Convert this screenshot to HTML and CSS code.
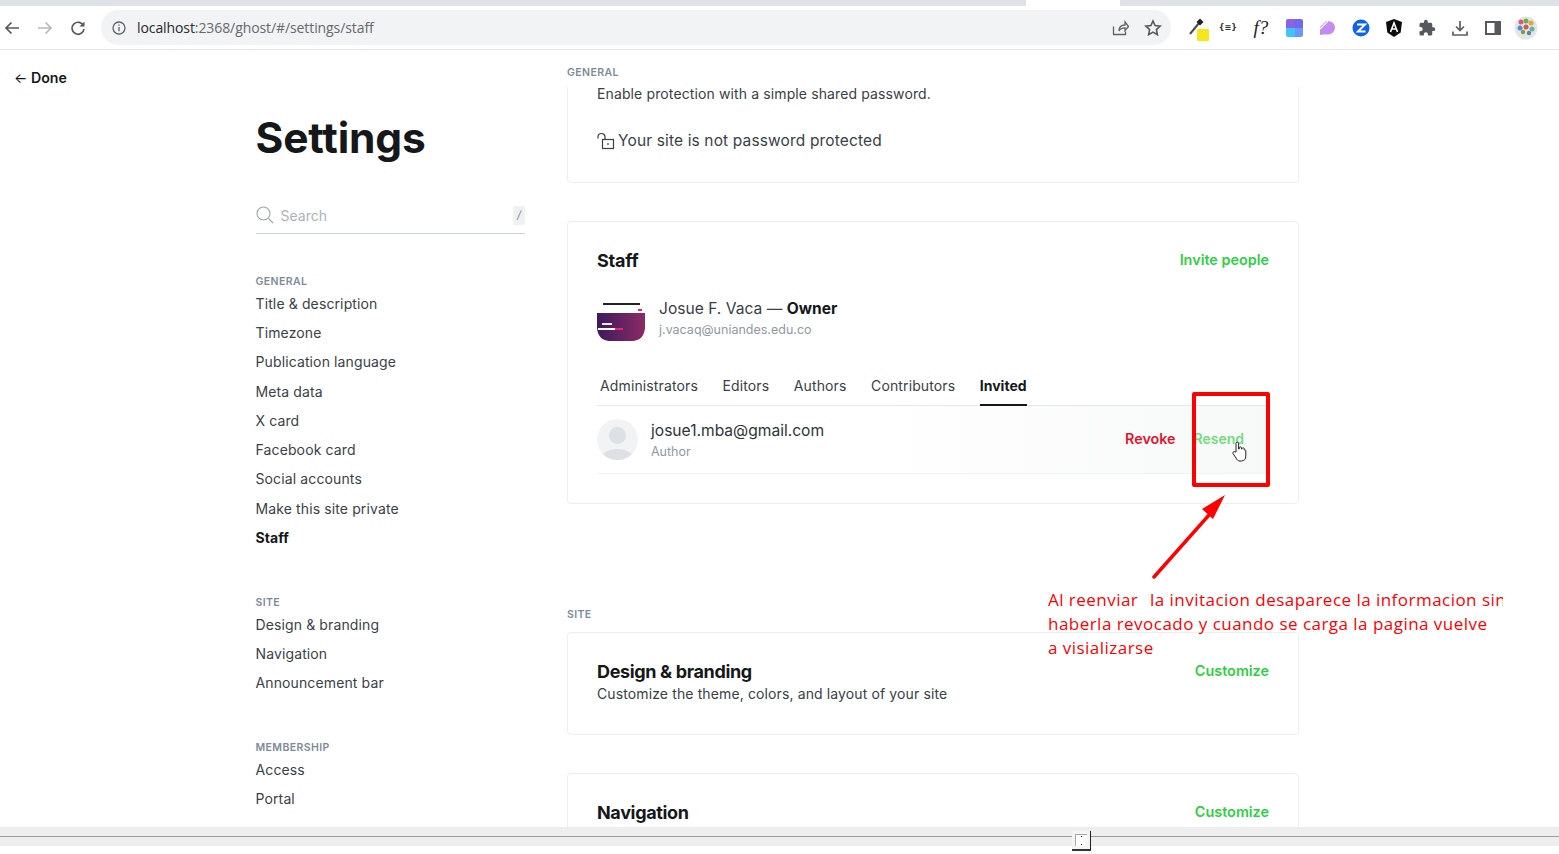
FILE: index.html
```html
<!DOCTYPE html>
<html lang="en">
<head>
<meta charset="utf-8">
<title>Settings - Staff</title>
<link rel="stylesheet" href="styles.css">
</head>
<body>
<div class="tabstrip"><div class="tab-gap"></div></div>
<header class="toolbar">
  <div class="nav-btn"><svg width="16" height="16" viewBox="0 0 16 16"><path d="M15 8H2M7.500 2.500 2 8l5.500 5.500" class="ic"/></svg></div>
  <div class="nav-btn"><svg width="16" height="16" viewBox="0 0 16 16"><path d="M1 8h13M8.500 2.500 14 8l-5.500 5.500" class="ic ic-dim"/></svg></div>
  <div class="nav-btn"><svg width="16" height="16" viewBox="0 0 16 16"><path d="M13.600 6A6 6 0 1 0 14 9" class="ic"/><path d="M14.500 1.500v5h-5z" class="ic-fill"/></svg></div>
  <div class="omnibox">
    <svg class="info" width="14" height="14" viewBox="0 0 14 14"><circle cx="7" cy="7" r="6" class="ic-thin"/><path d="M7 6v4.200M7 3.500v1.300" class="ic-thin"/></svg>
    <span class="url"><span class="url-host">localhost</span>:2368/ghost/#/settings/staff</span>
    <div class="omni-actions">
      <svg width="18" height="18" viewBox="0 0 18 18"><path d="M2.500 7.500v8h12v-3M8 12c0-4 2.500-6 6-6V3l3.500 4.500L14 11.500V8.800c-3 0-5 1-6 3.200z" class="ic-thin"/></svg>
      <svg width="18" height="18" viewBox="0 0 18 18"><path d="m9 2 2.100 4.600 5 .6-3.700 3.400 1 5L9 13.100 4.600 15.600l1-5L1.900 7.200l5-.6z" class="ic-star"/></svg>
    </div>
  </div>
  <div class="ext-row">
    <div class="ext ext-first"><svg width="28" height="26" viewBox="0 0 28 26"><path d="M9 19 18 8" class="drop"/><path d="M19 3.500l3.500 3.500-3.500 3.500-3.500-3.500z" fill="#222"/><rect x="16" y="14" width="12" height="12" rx="1" fill="#f6e71d"/></svg></div>
    <div class="ext ext-json">{≡}</div>
    <div class="ext ext-f">f?</div>
    <div class="ext"><svg width="17" height="18" viewBox="0 0 17 18"><defs><clipPath id="tile"><rect width="17" height="18" rx="2"/></clipPath></defs><g clip-path="url(#tile)"><rect width="9" height="9" fill="#8a63e8"/><rect x="9" width="8" height="9" fill="#7468ee"/><rect y="9" width="9" height="9" fill="#3fc4fb"/><rect x="9" y="9" width="8" height="9" fill="#6a97fa"/></g></svg></div>
    <div class="ext"><svg width="16" height="16" viewBox="0 0 16 16"><path d="M1 15V7L7 1h2a7 7 0 0 1 7 6.500A7 7 0 0 1 9 14.500H4z" fill="#c58bf0"/><path d="M1 5.500 5.500 1M1 9l8-8" stroke="#fff" stroke-width="1.300"/></svg></div>
    <div class="ext"><svg width="18" height="18" viewBox="0 0 18 18"><circle cx="9" cy="9" r="8.500" fill="#0f62ea"/><path d="M5 5.500h8L6 12.500h7.500" fill="none" stroke="#fff" stroke-width="2"/></svg></div>
    <div class="ext"><svg width="18" height="18" viewBox="0 0 18 18"><path d="M9 0 17 3l-1.300 10.500L9 18l-6.700-4.500L1 3z" fill="#0c0c0c"/><path d="M5.500 13 9 4l3.500 9M6.800 10h4.400" fill="none" stroke="#fff" stroke-width="1.600"/></svg></div>
    <div class="ext"><svg width="18" height="18" viewBox="0 0 24 24"><path d="M20.500 11H19V7c0-1.100-.9-2-2-2h-4V3.500a2.500 2.500 0 0 0-5 0V5H4c-1.100 0-2 .9-2 2v3.800h1.500c1.490 0 2.700 1.210 2.700 2.700s-1.210 2.700-2.700 2.700H2V20c0 1.100.9 2 2 2h3.800v-1.500c0-1.490 1.210-2.700 2.700-2.700s2.700 1.210 2.700 2.700V22H17c1.100 0 2-.9 2-2v-4h1.500a2.500 2.500 0 0 0 0-5z" fill="#55585c"/></svg></div>
    <div class="ext"><svg width="18" height="18" viewBox="0 0 18 18"><path d="M9 2v9M5 7.500 9 11.500l4-4M2 12.500v3.500h14v-3.500" class="ic ic-gray"/></svg></div>
    <div class="ext"><svg width="16" height="16" viewBox="0 0 16 16"><rect x="1" y="2" width="14" height="12" fill="#fff" stroke="#55585c" stroke-width="2"/><rect x="9.500" y="2" width="5" height="12" fill="#55585c"/></svg></div>
    <div class="ext"><svg width="24" height="24" viewBox="0 0 24 24"><circle cx="12" cy="12" r="11.500" fill="#e4e6e6"/><circle cx="7" cy="6" r="2.500" fill="#e0557a"/><circle cx="12" cy="5" r="2.500" fill="#62b34d"/><circle cx="17" cy="7" r="2.500" fill="#e9a23b"/><circle cx="6" cy="12" r="2.500" fill="#4c8fd1"/><circle cx="12" cy="11" r="2.500" fill="#d9534f"/><circle cx="18" cy="13" r="2.500" fill="#5fb5a8"/><circle cx="9" cy="16" r="2.200" fill="#7e9a4a"/><circle cx="15" cy="17" r="2.200" fill="#5d7fa8"/></svg></div>
  </div>
</header>

<main class="page">
  <div class="back-col"><a class="done"><span class="done-arrow">←</span> Done</a></div>

  <aside class="sidebar">
    <h1 class="title">Settings</h1>
    <div class="search">
      <svg width="18" height="18" viewBox="0 0 18 18"><circle cx="7.500" cy="7.500" r="6.500" class="search-ic"/><path d="m12.500 12.500 4.500 4.500" class="search-ic"/></svg>
      <span class="search-text">Search</span>
      <span class="kbd">/</span>
    </div>
    <div class="nav-group">
      <div class="group-label side-label">GENERAL</div>
      <div class="nav-item">Title &amp; description</div>
      <div class="nav-item">Timezone</div>
      <div class="nav-item">Publication language</div>
      <div class="nav-item">Meta data</div>
      <div class="nav-item">X card</div>
      <div class="nav-item">Facebook card</div>
      <div class="nav-item">Social accounts</div>
      <div class="nav-item">Make this site private</div>
      <div class="nav-item nav-active">Staff</div>
    </div>
    <div class="nav-group">
      <div class="group-label side-label">SITE</div>
      <div class="nav-item">Design &amp; branding</div>
      <div class="nav-item">Navigation</div>
      <div class="nav-item">Announcement bar</div>
    </div>
    <div class="nav-group">
      <div class="group-label side-label">MEMBERSHIP</div>
      <div class="nav-item">Access</div>
      <div class="nav-item">Portal</div>
    </div>
  </aside>

  <section class="content">
    <div class="sticky-label"><span class="group-label">GENERAL</span></div>
    <div class="card card-clipped">
      <p class="desc">Enable protection with a simple shared password.</p>
      <div class="lock-row">
        <svg width="18" height="18" viewBox="0 0 18 18"><rect x="5.500" y="7.500" width="11" height="9" class="lock"/><path d="M1 6.500V5a3.500 3.500 0 0 1 7 0v2.500" class="lock"/><path d="M11 11v2" class="lock"/></svg>
        <span>Your site is not password protected</span>
      </div>
    </div>

    <div class="card card-staff">
      <div class="card-head">
        <h2 class="card-title">Staff</h2>
        <a class="link-green">Invite people</a>
      </div>
      <div class="owner">
        <svg class="owner-pic" width="48" height="48" viewBox="0 0 48 48">
          <defs>
            <linearGradient id="ownerBg" x1="0" y1="0" x2="1" y2="0"><stop offset="0" stop-color="#3d1a5c"/><stop offset="1" stop-color="#8a2c66"/></linearGradient>
          </defs>
          <rect x="6" y="8" width="37" height="2" fill="#222"/>
          <rect x="41" y="14" width="4" height="2" fill="#f0246b"/>
          <path d="M0 18H48V33Q47 45 36 46H12Q1 45 0 33Z" fill="url(#ownerBg)"/>
          <rect x="5" y="28" width="10" height="2" fill="#e8e8ee"/>
          <rect x="1" y="33" width="17" height="2" fill="#fff"/>
          <rect x="18" y="33" width="8" height="2" fill="#f0246b"/>
        </svg>
        <div>
          <div class="owner-name">Josue F. Vaca — <strong>Owner</strong></div>
          <div class="owner-mail">j.vacaq@uniandes.edu.co</div>
        </div>
      </div>
      <nav class="tabs">
        <span class="tab">Administrators</span>
        <span class="tab">Editors</span>
        <span class="tab">Authors</span>
        <span class="tab">Contributors</span>
        <span class="tab tab-active">Invited</span>
      </nav>
      <div class="invite">
        <svg class="invite-pic" width="41" height="41" viewBox="0 0 41 41"><defs><clipPath id="inv"><circle cx="20.500" cy="20.500" r="20.500"/></clipPath></defs><g clip-path="url(#inv)"><rect width="41" height="41" fill="#f1f3f4"/><circle cx="20.500" cy="16.500" r="8.500" fill="#dde0e4"/><ellipse cx="20.500" cy="39" rx="16" ry="9" fill="#dde0e4"/></g></svg>
        <div class="invite-text">
          <div class="invite-mail">josue1.mba@gmail.com</div>
          <div class="invite-role">Author</div>
        </div>
        <a class="link-red">Revoke</a>
        <a class="link-resend">Resend</a>
      </div>
    </div>

    <div class="section-label"><span class="group-label">SITE</span></div>
    <div class="card card-design">
      <div class="design-row">
        <div>
          <h2 class="card-title card-title-lg">Design &amp; branding</h2>
          <p class="desc desc-tight">Customize the theme, colors, and layout of your site</p>
        </div>
        <a class="link-green">Customize</a>
      </div>
    </div>
    <div class="card card-nav">
      <div class="nav-row">
        <h2 class="card-title card-title-lg">Navigation</h2>
        <a class="link-green">Customize</a>
      </div>
    </div>
  </section>

  <div class="annot-box"></div>
  <svg class="annot-arrow" width="90" height="100" viewBox="0 0 90 100"><path d="M5 85 68 14" stroke="#f00" stroke-width="3.500" stroke-linecap="round"/><path d="M76 3 53 17l11 10z" fill="#f00"/></svg>
  <svg class="cursor" width="15" height="21" viewBox="0 0 15 21"><path d="M4 11V2.500a1.300 1.300 0 0 1 2.600 0V8h.6V6.800a1.200 1.200 0 0 1 2.300 0V8h.5V7.500a1.200 1.200 0 0 1 2.200 0V9c1-.4 1.600 0 1.600 1v5c0 3-1.500 5-4.500 5H8c-2 0-3-1-4-3l-3-4.500c-.6-1.500 1-2.500 2-1.500z" fill="#fff" stroke="#222" stroke-width="1"/></svg>
  <div class="annot-text">
    <div>Al reenviar&nbsp; <span class="annot-gap">la invitacion desaparece la informacion sin</span></div>
    <div>haberla revocado y cuando se carga la pagina vuelve</div>
    <div>a visializarse</div>
  </div>
</main>

<footer class="bottom-bar">
  <div class="bottom-line"></div>
  <div class="thumb"><div class="thumb-inner"></div></div>
</footer>
</body>
</html>
```
FILE: styles.css
```css
* { box-sizing: border-box; }
html, body { margin: 0; padding: 0; height: 100%; overflow: hidden; background: #fff; }
body { width: 1559px; height: 854px; font-family: Inter, "Liberation Sans", sans-serif; color: #15171a; position: relative; }

.tabstrip { height: 6px; background: #dee1e6; position: relative; }
.tab-gap { position: absolute; left: 1026px; top: 0; width: 94px; height: 6px; background: #fff; }

.toolbar { height: 44px; display: flex; align-items: center; border-bottom: 1px solid #e3e5e7; background: #fff; }
.nav-btn { width: 33px; height: 34px; display: flex; align-items: center; justify-content: center; flex: none; }
.nav-btn:first-child { margin-left: -5px; }
.ic { fill: none; stroke: #55585c; stroke-width: 1.7; }
.ic-dim { stroke: #b5b8bb; }
.ic-gray { stroke: #5b5e62; }
.ic-fill { fill: #55585c; }
.ic-thin { fill: none; stroke: #5f6368; stroke-width: 1.3; }
.ic-star { fill: none; stroke: #55585c; stroke-width: 1.6; }
.omnibox { width: 1070px; height: 35px; border-radius: 18px; background: #f1f3f4; display: flex; align-items: center; margin-left: 7px; padding: 0 9px 0 11px; flex: none; }
.info { flex: none; margin-right: 11px; }
.url { font-family: "Open Sans", sans-serif; font-size: 14px; color: #66696d; letter-spacing: -0.09px; }
.url-host { color: #26282b; }
.omni-actions { margin-left: auto; display: flex; gap: 15px; align-items: center; }
.ext-row { display: flex; align-items: center; margin-left: 7px; flex: none; }
.ext { width: 33.2px; height: 34px; display: flex; align-items: center; justify-content: center; flex: none; }
.ext-first { overflow: visible; }
.drop { stroke: #4a4f4a; stroke-width: 2; }
.ext-json { font-family: "DejaVu Sans", sans-serif; font-size: 8px; font-weight: 700; color: #333; }
.ext-f { font-family: "Liberation Serif", serif; font-style: italic; font-size: 19px; color: #222; }

.page { height: 777px; overflow: hidden; display: grid; grid-template-columns: 255.500px 269.500px 732px; position: relative; }
.back-col { padding: 19px 0 0 14px; }
.done { font-size: 14.200px; font-weight: 600; line-height: 17px; display: block; color: #15171a; }
.done-arrow { font-size: 14px; font-weight: 400; }

.sidebar { min-width: 0; }
.title { margin: 63px 0 0; font-size: 42.500px; line-height: 50px; font-weight: 700; letter-spacing: -0.15px; color: #15171a; }
.search { margin-top: 34px; height: 37px; display: flex; align-items: center; border-bottom: 1px solid #c8d1da; }
.search-ic { fill: none; stroke: #9aa3ab; stroke-width: 1.100; }
.search-text { margin-left: 7px; font-size: 14px; color: #aab2ba; }
.kbd { margin-left: auto; width: 12px; height: 19px; border-radius: 2px; background: #eff1f3; font-size: 11px; color: #7d8791; font-style: italic; text-align: center; line-height: 19px; }
.nav-group { margin-bottom: 41.600px; }
.search + .nav-group { margin-top: 38.800px; }
.group-label { display: block; font-size: 10.500px; line-height: 16px; font-weight: 600; color: #7c8b9a; letter-spacing: 0.4px; }
.side-label { height: 16px; padding-top: 1px; line-height: 15px; }
.nav-item { font-size: 14px; line-height: 29.250px; color: #3a4149; letter-spacing: 0.12px; }
.nav-active { font-weight: 700; color: #15171a; letter-spacing: 0.05px; }

.content { grid-column: 3; margin-left: 42px; width: 732px; }
.sticky-label { height: 37px; padding-top: 15px; }
.section-label { height: 16px; margin: 103px 0 9px; }
.card { border: 1px solid #eceef0; border-radius: 4px; padding: 0 29px; }
.card-clipped { height: 96px; border-top: 0; border-radius: 0 0 4px 4px; }
.desc { margin: 0; font-size: 14px; line-height: 14px; color: #394047; letter-spacing: 0.12px; }
.lock-row { margin-top: 30px; display: flex; align-items: center; gap: 3px; font-size: 15.500px; line-height: 20px; color: #394047; letter-spacing: 0.14px; }
.lock { fill: none; stroke: #394047; stroke-width: 1.200; }
.card-staff { margin-top: 38px; height: 283px; }
.card-head { display: flex; justify-content: space-between; align-items: center; height: 24px; margin-top: 27px; }
.card-title { margin: 0; font-size: 18px; line-height: 24px; font-weight: 700; color: #15171a; letter-spacing: -0.2px; }
.card-title-lg { letter-spacing: -0.35px; }
.link-green { display: block; font-size: 14.400px; font-weight: 600; color: #30cf43; line-height: 22px; padding-bottom: 2px; }
.owner { display: flex; align-items: center; gap: 14px; margin-top: 19px; height: 54px; }
.owner-pic { flex: none; }
.owner-name { font-size: 15.600px; line-height: 21px; color: #394047; }
.owner-name strong { font-weight: 700; color: #15171a; }
.owner-mail { font-size: 12.500px; line-height: 21px; color: #8e99a3; }
.tabs { margin-top: 24px; height: 36px; display: flex; gap: 24.500px; padding: 0 3px; border-bottom: 1px solid #e5e8ea; }
.tab { font-size: 14px; line-height: 20px; padding-top: 6px; color: #394047; letter-spacing: 0.13px; }
.tab-active { font-weight: 700; color: #15171a; border-bottom: 2px solid #15171a; letter-spacing: 0; height: 36px; }
.invite { height: 68px; display: flex; align-items: center; border-bottom: 1px solid #eff1f3; background: linear-gradient(90deg, #fff 40%, #f7f8f8 100%); }
.invite-pic { flex: none; }
.invite-text { margin-left: 13px; margin-top: 2px; }
.invite-mail { font-size: 15.600px; line-height: 21px; color: #2e343a; }
.invite-role { font-size: 12.500px; line-height: 21px; color: #8e99a3; }
.link-red { margin-left: auto; margin-bottom: 2px; font-size: 14.300px; font-weight: 600; color: #e5142c; }
.link-resend { margin-left: 18px; margin-right: 25px; margin-bottom: 2px; font-size: 14px; font-weight: 600; color: #71dd7e; }
.card-design { height: 103px; }
.design-row { display: flex; justify-content: space-between; align-items: flex-start; margin-top: 27px; }
.desc-tight { margin-top: 1px; line-height: 18px; }
.card-nav { margin-top: 38px; height: 120px; }
.nav-row { display: flex; justify-content: space-between; align-items: center; margin-top: 27px; }

.annot-box { position: absolute; left: 1192px; top: 342px; width: 78px; height: 95px; border: 4px solid #f00; border-radius: 2px; }
.annot-arrow { position: absolute; left: 1149px; top: 442px; }
.cursor { position: absolute; left: 1232px; top: 391px; }
.annot-text { position: absolute; left: 1048px; top: 538px; width: 455px; overflow: hidden; white-space: nowrap; font-family: "Open Sans", sans-serif; font-size: 17px; line-height: 24px; color: #f00; letter-spacing: 0.47px; }
.annot-gap { margin-left: 2px; }

.bottom-bar { height: 27px; position: relative; }
.bottom-bar::before { content: ""; display: block; height: 19px; background: #eeeeee; }
.bottom-line { position: absolute; left: 0; right: 0; top: 9px; height: 1px; background: #9c9c9c; }
.thumb { position: absolute; left: 1072px; top: 4px; width: 19px; height: 20px; background: #f4f4f4; border-right: 1px solid #222; border-bottom: 2px solid #333; padding: 3px; }
.thumb-inner { width: 12px; height: 12px; background: #fff; border-top: 1px solid #aaa; border-left: 1px solid #aaa; position: relative; }
.thumb-inner::before, .thumb-inner::after { content: ""; position: absolute; left: 5px; width: 1px; height: 1px; background: #000; }
.thumb-inner::before { top: 1px; }
.thumb-inner::after { top: 9px; }
```
